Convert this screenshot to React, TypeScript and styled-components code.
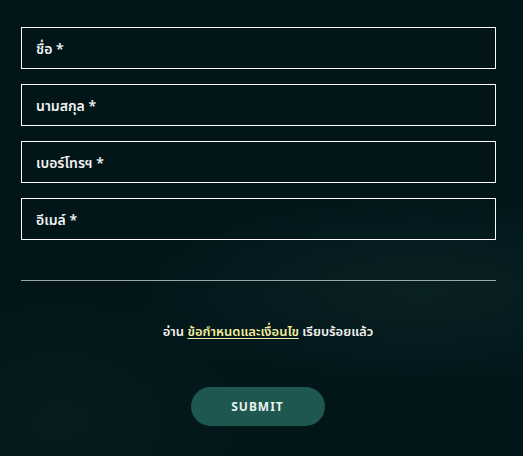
import React from "react";
import styled, { createGlobalStyle } from "styled-components";

const Global = createGlobalStyle`
  html, body { margin: 0; padding: 0; }
  body {
    width: 523px;
    height: 456px;
    overflow: hidden;
    background: #02161a;
    font-family: "Noto Sans", "Noto Sans Thai", "DejaVu Sans", sans-serif;
  }
`;

const Page = styled.div`
  width: 523px;
  height: 456px;
  box-sizing: border-box;
  padding: 27px 28px 0 21px;
  background:
    radial-gradient(ellipse 420px 140px at 420px 290px, rgba(30, 60, 60, 0.28), transparent 70%),
    radial-gradient(ellipse 300px 200px at 60px 420px, rgba(20, 45, 45, 0.25), transparent 70%),
    #02161a;
`;

const Form = styled.form`
  display: flex;
  flex-direction: column;
`;

const Fields = styled.div`
  display: flex;
  flex-direction: column;
  gap: 15px;
`;

const Field = styled.input`
  box-sizing: border-box;
  width: 475px;
  height: 42px;
  border: 1px solid #ffffff;
  background: transparent;
  padding: 0 14px;
  font-family: inherit;
  font-size: 14px;
  font-weight: 600;
  color: #ffffff;
  outline: none;
  &::placeholder {
    color: #f2f2f2;
    opacity: 1;
  }
`;

const Divider = styled.hr`
  margin: 40px 0 0 0;
  width: 475px;
  border: none;
  border-top: 1px solid #9aa6a6;
  height: 0;
`;

const Agree = styled.div`
  margin-top: 40px;
  padding-left: 20px;
  text-align: center;
  font-size: 13px;
  font-weight: 600;
  color: #f3f3ee;
  line-height: 20px;
`;

const TermsLink = styled.a`
  color: #f3ec9c;
  text-decoration: underline;
  text-underline-offset: 2px;
`;

const ButtonRow = styled.div`
  display: flex;
  justify-content: center;
  width: 473px;
  margin-top: 46px;
`;

const Submit = styled.button`
  width: 134px;
  height: 39px;
  border: none;
  border-radius: 20px;
  background: #1e5650;
  color: #e8f2ef;
  font-family: inherit;
  font-size: 12px;
  font-weight: 700;
  letter-spacing: 1px;
  cursor: pointer;
`;

export default function App() {
  return (
    <>
      <Global />
      <Page>
        <Form onSubmit={(e) => e.preventDefault()}>
          <Fields>
            <Field placeholder="ชื่อ *" />
            <Field placeholder="นามสกุล *" />
            <Field placeholder="เบอร์โทรฯ *" />
            <Field placeholder="อีเมล์ *" />
          </Fields>
          <Divider />
          <Agree>
            อ่าน <TermsLink href="#">ข้อกำหนดและเงื่อนไข</TermsLink> เรียบร้อยแล้ว
          </Agree>
          <ButtonRow>
            <Submit type="submit">SUBMIT</Submit>
          </ButtonRow>
        </Form>
      </Page>
    </>
  );
}
